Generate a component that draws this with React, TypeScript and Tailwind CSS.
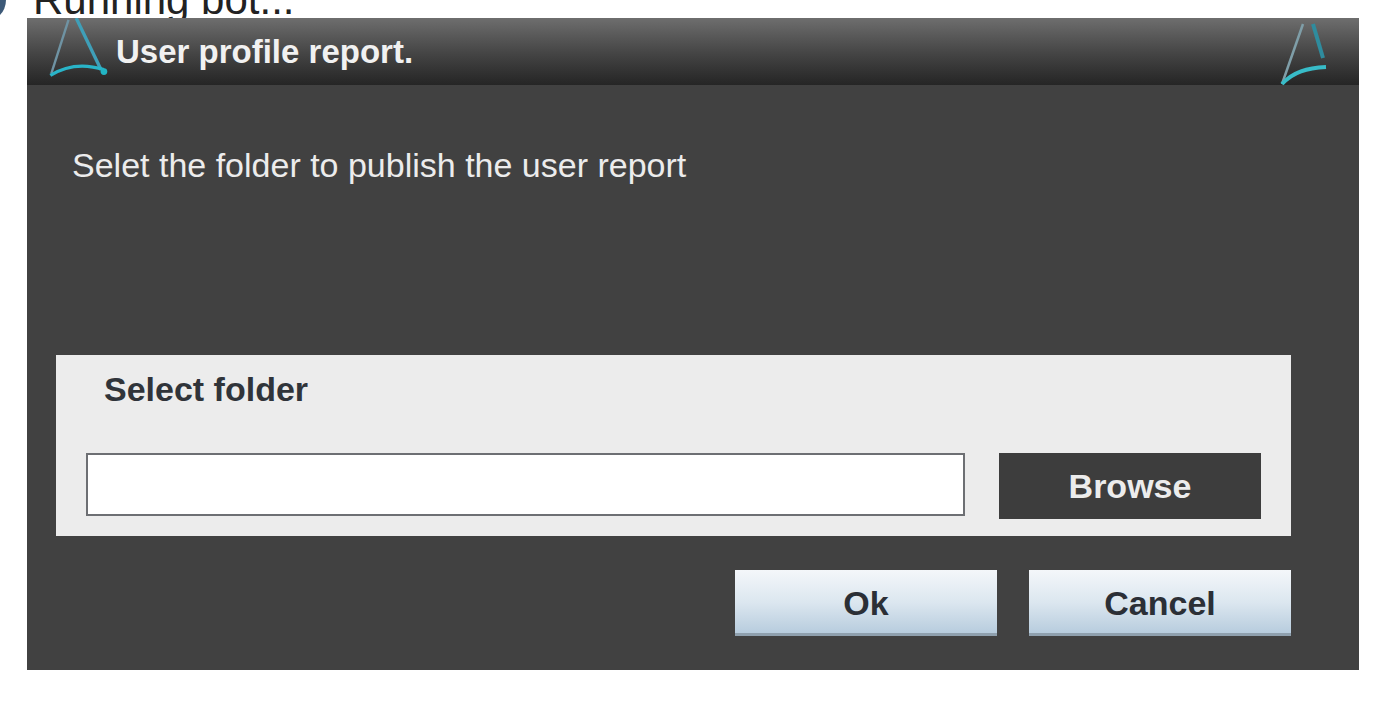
function Logo({ className }: { className: string }) {
	return (
		<svg className={className} viewBox="0 0 70 70" fill="none">
			<path d="M23 2 L5 58" stroke="#6f93a3" strokeWidth="2.5" />
			<path d="M31 0 L57 54" stroke="#3f9fb8" strokeWidth="3.5" />
			<path d="M4 60 C20 50 38 47 60 54" stroke="#29b4c8" strokeWidth="3.5" />
			<circle cx="60" cy="56" r="3.5" fill="#22b5c4" />
		</svg>
	);
}

function LogoRight({ className }: { className: string }) {
	return (
		<svg className={className} viewBox="0 0 50 68" fill="none">
			<path d="M24 6 L3 66" stroke="#7f9ea8" strokeWidth="2.5" />
			<path d="M34 6 L44 40" stroke="#2f8c9e" strokeWidth="4" />
			<path d="M3 66 C14 54 28 50 47 49" stroke="#38bcc8" strokeWidth="4" />
		</svg>
	);
}

export default function App() {
	return (
		<div className="h-[720px] overflow-hidden bg-white font-['Liberation_Sans',Arial,sans-serif]">
			<div className="relative h-[18px] overflow-hidden">
				<div className="absolute left-[-38px] top-[-22px] h-[44px] w-[44px] rounded-full bg-[#3d5a78]" />
				<div className="ml-[33px] mt-[-24px] whitespace-nowrap text-[42px] leading-[48px] text-[#222]">Running bot...</div>
			</div>

			<div className="ml-[27px] flex h-[652px] w-[1332px] flex-col bg-[#414141]">
				<div className="relative flex h-[67px] items-center bg-gradient-to-b from-[#6e6e6e] via-[#474747] to-[#252525] pl-[89px]">
					<Logo className="absolute left-[18px] top-0 h-[67px] w-[70px]" />
					<span className="relative text-[33px] font-bold leading-[67px] text-[#f1f1f1]">User profile report.</span>
					<LogoRight className="absolute left-[1252px] top-0 h-[68px] w-[50px]" />
				</div>

				<p className="ml-[45px] mt-[59px] text-[34px] leading-[42px] text-[#ececec]">Selet the folder to publish the user report</p>

				<div className="ml-[29px] mt-[169px] h-[181px] w-[1235px] bg-[#ececec] pl-[30px] pt-[14px]">
					<div className="ml-[18px] text-[34px] font-bold leading-[40px] text-[#30343a]">Select folder</div>
					<div className="mt-[44px] flex gap-[34px]">
						<div className="h-[63px] w-[879px] border-2 border-[#6d6f73] bg-white" />
						<button className="h-[66px] w-[262px] bg-[#3d3d3d] text-[34px] font-bold leading-[66px] text-[#ececec]">Browse</button>
					</div>
				</div>

				<div className="ml-[708px] mt-[34px] flex gap-[32px]">
					<button className="h-[66px] w-[262px] bg-gradient-to-b from-[#f4f7fa] via-[#dbe6ef] to-[#b4cadc] text-[34px] font-bold leading-[66px] text-[#2b2f36] shadow-[inset_0_-3px_0_#8fa0ae]">Ok</button>
					<button className="h-[66px] w-[262px] bg-gradient-to-b from-[#f4f7fa] via-[#dbe6ef] to-[#b4cadc] text-[34px] font-bold leading-[66px] text-[#2b2f36] shadow-[inset_0_-3px_0_#8fa0ae]">Cancel</button>
				</div>
			</div>
		</div>
	);
}
